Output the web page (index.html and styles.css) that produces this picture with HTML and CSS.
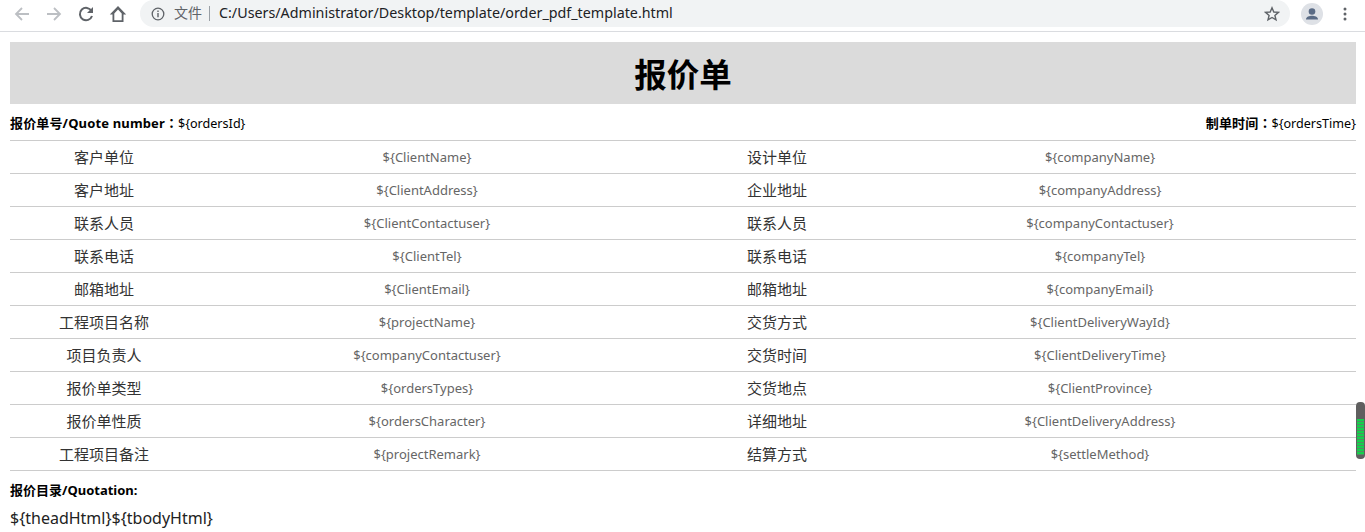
FILE: index.html
```html
<!DOCTYPE html>
<html lang="zh">
<head>
<meta charset="utf-8">
<title>报价单</title>
<link rel="stylesheet" href="styles.css">
</head>
<body>
<header class="toolbar">
  <svg class="nav" width="18" height="18" viewBox="0 0 18 18"><path d="M16 9H3M9 3 3 9l6 6" fill="none" stroke="#bcbfc3" stroke-width="1.800"/></svg>
  <svg class="nav" width="18" height="18" viewBox="0 0 18 18"><path d="M2 9h13M9 3l6 6-6 6" fill="none" stroke="#bcbfc3" stroke-width="1.800"/></svg>
  <svg class="nav" width="18" height="18" viewBox="0 0 18 18"><path d="M14.500 6A6.200 6.200 0 1 0 15 11" fill="none" stroke="#5f6368" stroke-width="2"/><path d="M16 2v6h-6z" fill="#5f6368"/></svg>
  <svg class="nav" width="18" height="18" viewBox="0 0 18 18"><path d="M9 1 .8 9.500h2.700V17h11V9.500h2.700zM5.300 15.200V8.400L9 4.400l3.700 4v6.800z" fill="#5f6368" fill-rule="evenodd"/></svg>
  <div class="omnibox">
    <svg class="info" width="14" height="14" viewBox="0 0 14 14"><circle cx="7" cy="7" r="5.800" fill="none" stroke="#5f6368" stroke-width="1.300"/><path d="M6.300 6h1.400v4.300H6.300zM6.300 3.600h1.400V5H6.300z" fill="#5f6368"/></svg>
    <span class="scheme">文件</span>
    <span class="sep"></span>
    <span class="url">C:/Users/Administrator/Desktop/template/order_pdf_template.html</span>
    <svg class="star" width="16" height="16" viewBox="0 0 16 16"><path d="M8 1.800 9.800 6l4.600.4-3.500 3 1.100 4.500L8 11.500l-4 2.400 1.100-4.500-3.500-3L6.200 6z" fill="none" stroke="#5f6368" stroke-width="1.400"/></svg>
  </div>
  <span class="avatar"><svg width="22" height="22" viewBox="0 0 22 22"><circle cx="11" cy="8.500" r="3.300" fill="#5a6b85"/><path d="M5 16.500c0-2.700 3.500-3.700 6-3.700s6 1 6 3.700z" fill="#5a6b85"/></svg></span>
  <svg class="menu" width="4" height="16" viewBox="0 0 4 16"><circle cx="2" cy="3" r="1.500" fill="#5f6368"/><circle cx="2" cy="8" r="1.500" fill="#5f6368"/><circle cx="2" cy="13" r="1.500" fill="#5f6368"/></svg>
</header>
<main class="page">
  <h1 class="title">报价单</h1>
  <div class="meta">
    <span class="meta-item"><b>报价单号/Quote number<span class="colon" lang="zh-Hant">：</span></b>${ordersId}</span>
    <span class="meta-item"><b>制单时间<span class="colon" lang="zh-Hant">：</span></b>${ordersTime}</span>
  </div>
  <table class="info-table">
    <colgroup><col class="c1"><col class="c2"><col class="c3"><col class="c4"></colgroup>
    <tbody>
      <tr><td class="label">客户单位</td><td class="value">${ClientName}</td><td class="label">设计单位</td><td class="value last">${companyName}</td></tr>
      <tr><td class="label">客户地址</td><td class="value">${ClientAddress}</td><td class="label">企业地址</td><td class="value last">${companyAddress}</td></tr>
      <tr><td class="label">联系人员</td><td class="value">${ClientContactuser}</td><td class="label">联系人员</td><td class="value last">${companyContactuser}</td></tr>
      <tr><td class="label">联系电话</td><td class="value">${ClientTel}</td><td class="label">联系电话</td><td class="value last">${companyTel}</td></tr>
      <tr><td class="label">邮箱地址</td><td class="value">${ClientEmail}</td><td class="label">邮箱地址</td><td class="value last">${companyEmail}</td></tr>
      <tr><td class="label">工程项目名称</td><td class="value">${projectName}</td><td class="label">交货方式</td><td class="value last">${ClientDeliveryWayId}</td></tr>
      <tr><td class="label">项目负责人</td><td class="value">${companyContactuser}</td><td class="label">交货时间</td><td class="value last">${ClientDeliveryTime}</td></tr>
      <tr><td class="label">报价单类型</td><td class="value">${ordersTypes}</td><td class="label">交货地点</td><td class="value last">${ClientProvince}</td></tr>
      <tr><td class="label">报价单性质</td><td class="value">${ordersCharacter}</td><td class="label">详细地址</td><td class="value last">${ClientDeliveryAddress}</td></tr>
      <tr><td class="label">工程项目备注</td><td class="value">${projectRemark}</td><td class="label">结算方式</td><td class="value last">${settleMethod}</td></tr>
    </tbody>
  </table>
  <p class="section"><b>报价目录/Quotation:</b></p>
  <p class="tpl">${theadHtml}${tbodyHtml}</p>
</main>
<div class="thumb" aria-hidden="true"><span class="thumb-fill"></span></div>
</body>
</html>
```
FILE: styles.css
```css
* { box-sizing: border-box; }
html, body { margin: 0; height: 532px; overflow: hidden; background: #fff; }
body { font-family: "Noto Sans", "Noto Sans CJK SC", sans-serif; color: #000; position: relative; }
.toolbar { height: 32px; display: flex; align-items: center; border-bottom: 1px solid #dadce0; padding-left: 13px; padding-bottom: 4px; background: #fff; }
.nav { margin-right: 14px; flex: none; }
.omnibox { width: 1150px; height: 27px; margin-left: -1px; border-radius: 14px; background: #f1f3f4; display: flex; align-items: center; padding: 0 10px 0 11px; flex: none; }
.info { margin-right: 9px; flex: none; }
.scheme { font-size: 14px; line-height: 20px; color: #5f6368; padding-bottom: 1px; }
.sep { width: 1px; height: 15px; background: #9aa0a6; margin: 0 9px 0 7px; }
.url { font-size: 14.300px; color: #202124; flex: 1; white-space: nowrap; padding-bottom: 2px; }
.star { flex: none; }
.avatar { width: 22px; height: 22px; border-radius: 50%; background: #dee1e6; margin-left: 11px; flex: none; display: block; }
.avatar svg { display: block; }
.menu { margin-left: 20px; flex: none; }
.page { padding: 10px 9px 0 10px; }
.title { margin: 0; height: 62px; background: #dbdbdb; font-size: 32.500px; line-height: 66px; font-weight: 700; text-align: center; }
.meta { display: flex; justify-content: space-between; height: 36px; align-items: center; }
.meta-item { font-size: 12.600px; }
.meta b { font-size: 13px; font-weight: 700; letter-spacing: .15px; }
.colon { font-family: "Noto Sans CJK TC", sans-serif; letter-spacing: 0; }
.info-table { width: 100%; border-collapse: collapse; table-layout: fixed; border-top: 1px solid #ccc; }
.c1 { width: 188px; }
.c2 { width: 458px; }
.c3 { width: 242px; }
.info-table td { height: 33px; padding: 0; text-align: center; border-bottom: 1px solid #ccc; }
.info-table .label { font-size: 15px; color: #333; padding-bottom: 2px; }
.value { font-size: 13px; color: #666; }
.value.last { padding-right: 54px; }
.section { margin: 0; height: 37px; display: flex; align-items: center; font-size: 13px; }
.tpl { margin: 0; font-size: 16px; line-height: 20px; color: #222; }
.thumb { position: absolute; left: 1356px; top: 402px; width: 9px; height: 57px; border-radius: 4px; background: #5f5f5f; overflow: hidden; }
.thumb-fill { display: block; margin: 17px 1px 2px; height: 36px; background: repeating-linear-gradient(#14d04c 0 2px, #4f8f62 2px 3px); }
```
